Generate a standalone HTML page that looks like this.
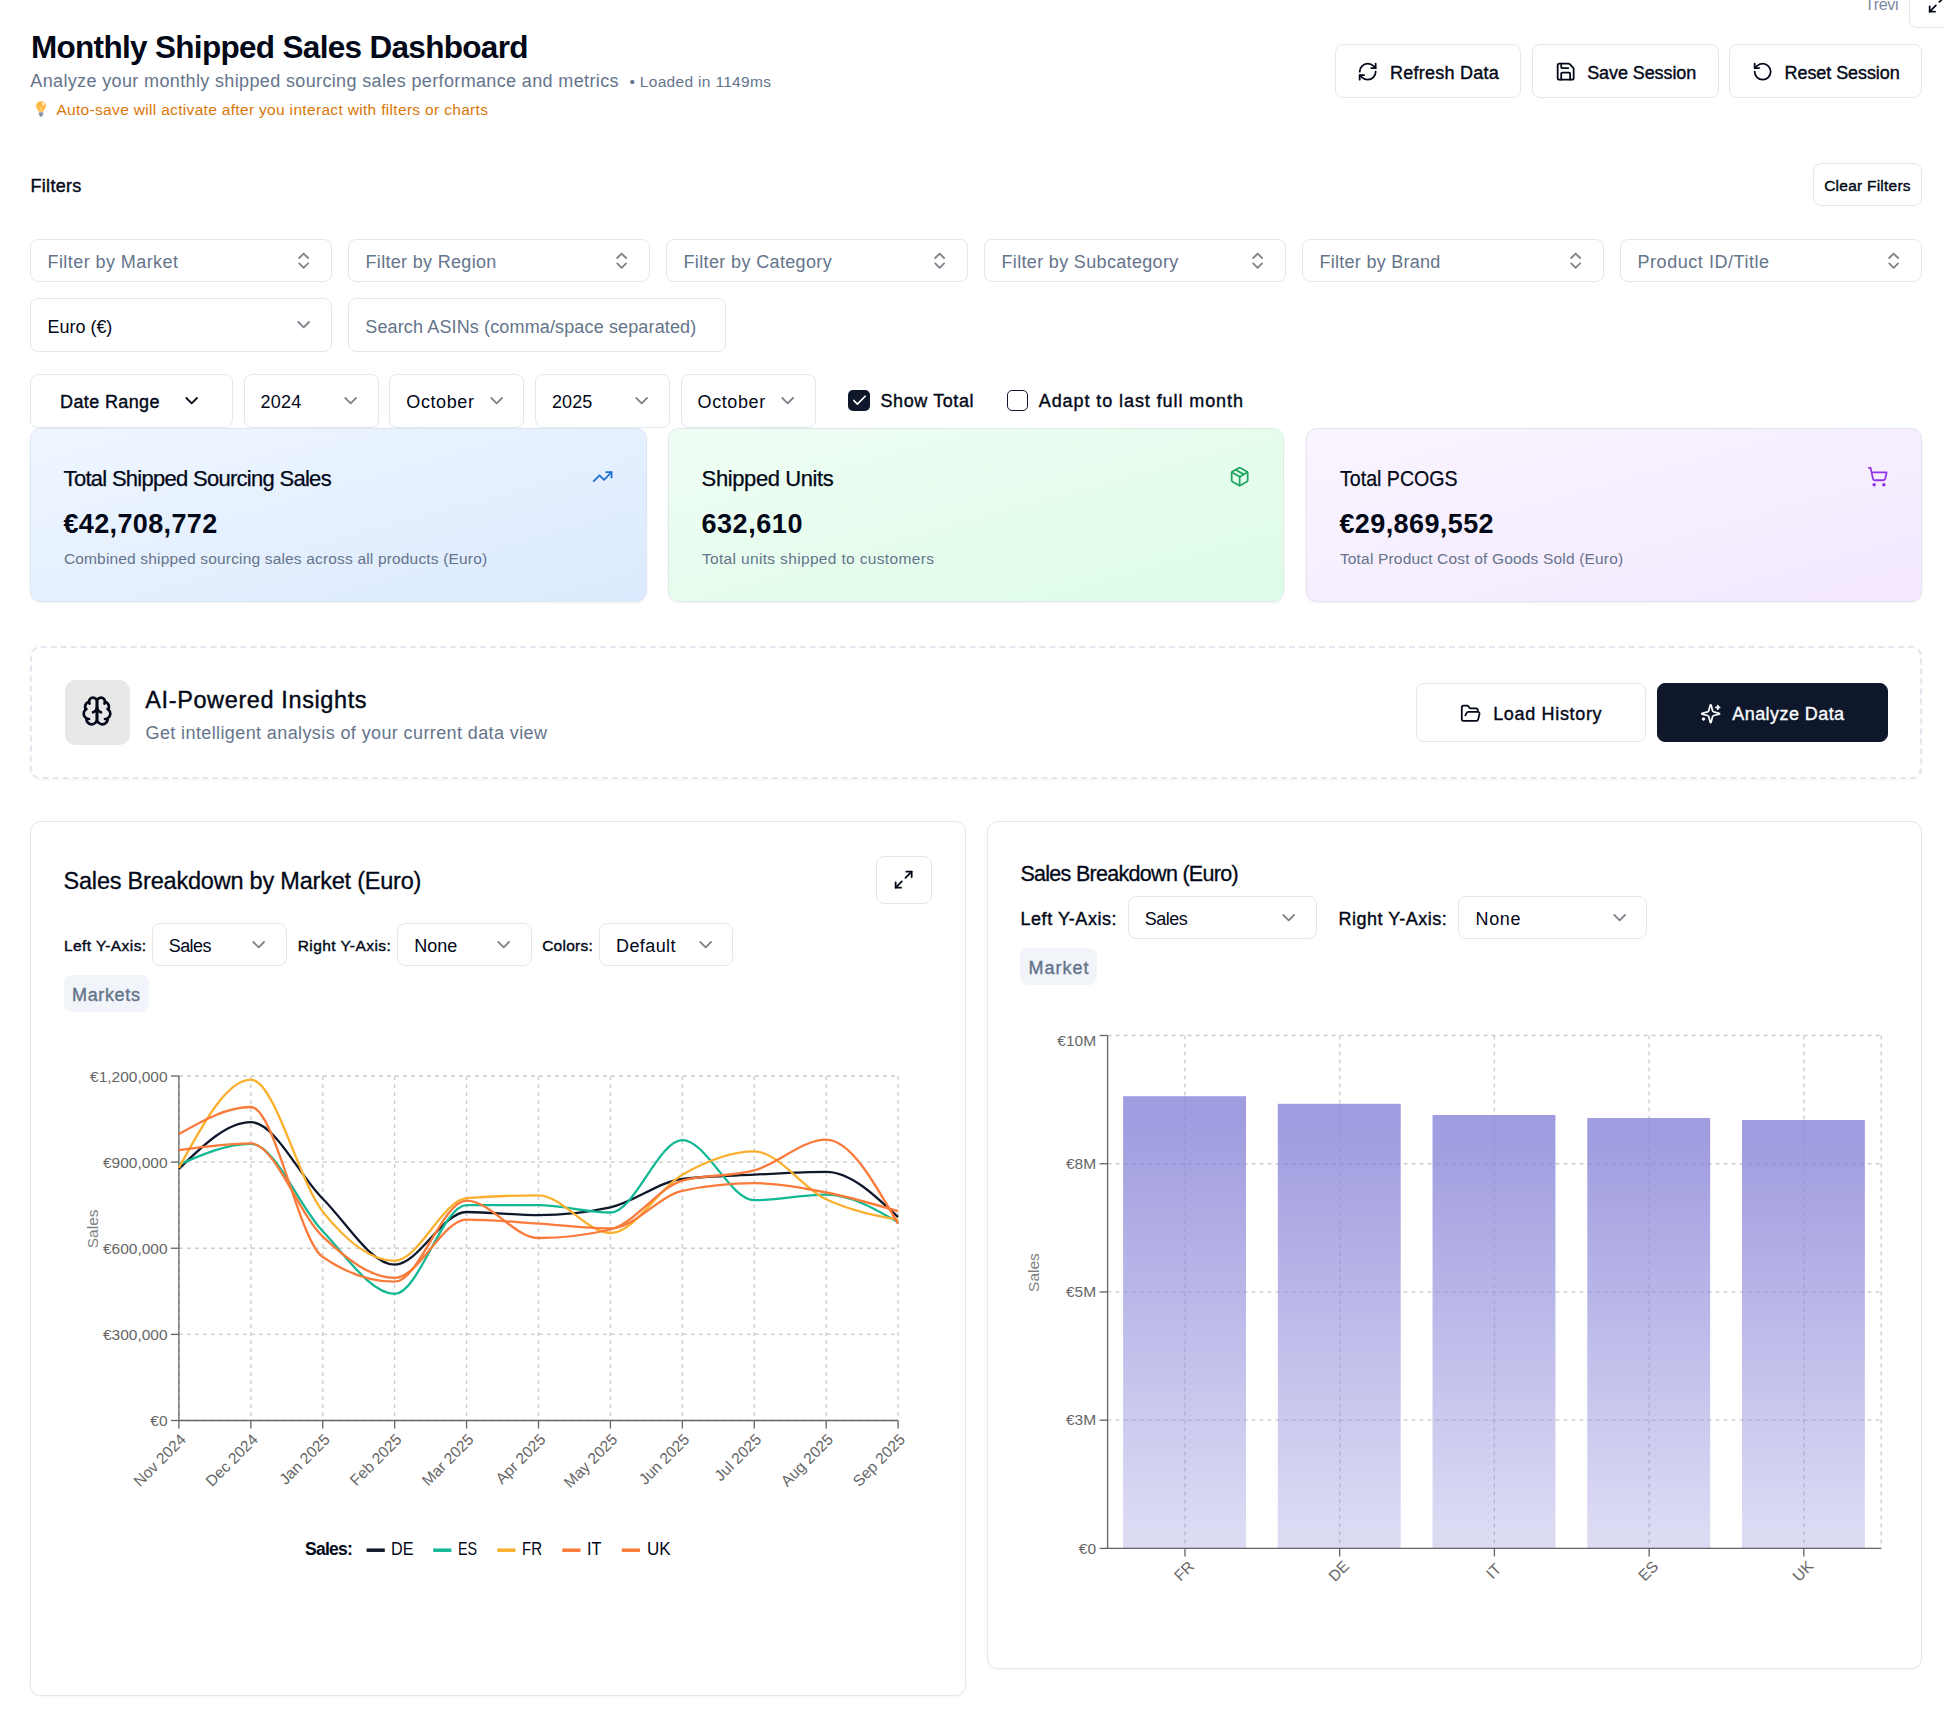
<!DOCTYPE html>
<html lang="en"><head><meta charset="utf-8"><title>Monthly Shipped Sales Dashboard</title>
<style>
html,body{margin:0;padding:0;background:#fff;}
body{width:1944px;height:1715px;position:relative;overflow:hidden;font-family:'Liberation Sans', sans-serif;}
.t{position:absolute;white-space:pre;line-height:1;}
svg text{font-family:'Liberation Sans', sans-serif;}
</style></head><body>
<svg style="position:absolute;left:33.3px;top:99.8px" width="16" height="18" viewBox="0 0 16 19"><path d="M8 1.2c-3 0-5.2 2.2-5.2 5 0 1.900 1 3.200 1.900 4.300.5.600.800 1.200.900 2h4.800c.1-.8.400-1.400.900-2 .9-1.100 1.900-2.400 1.900-4.300 0-2.800-2.200-5-5.200-5z" fill="#fdb945"/><ellipse cx="10.300" cy="3.900" rx="1.300" ry="1.700" transform="rotate(-35 10.300 3.900)" fill="#fff3d6"/><path d="M6.800 7l1.200 4 1.200-4" fill="none" stroke="#fbd27f" stroke-width=".8"/><rect x="5.600" y="12.800" width="4.800" height="3.400" rx=".8" fill="#8a95a3"/><rect x="6.600" y="16.200" width="2.800" height="1.200" rx=".6" fill="#5d6873"/></svg>
<div style="position:absolute;left:1909.00px;top:-20.00px;width:56.00px;height:48.00px;box-sizing:border-box;border:1px solid #e2e8f0;border-radius:8px;background:#fff"></div>
<svg style="position:absolute;left:1927.20px;top:-6.80px;opacity:1" width="21.33" height="21.33" viewBox="0 0 24 24" fill="none" stroke="#020817" stroke-width="2" stroke-linecap="round" stroke-linejoin="round"><polyline points="15 3 21 3 21 9"/><polyline points="9 21 3 21 3 15"/><line x1="21" x2="14" y1="3" y2="10"/><line x1="3" x2="10" y1="21" y2="14"/></svg>
<div style="position:absolute;left:1335.00px;top:44.00px;width:186.00px;height:54.00px;box-sizing:border-box;border:1px solid #e2e8f0;border-radius:8px;background:#fff"></div>
<svg style="position:absolute;left:1356.60px;top:61.13px;opacity:1" width="21.33" height="21.33" viewBox="0 0 24 24" fill="none" stroke="#020817" stroke-width="2" stroke-linecap="round" stroke-linejoin="round"><path d="M3 12a9 9 0 0 1 9-9 9.75 9.75 0 0 1 6.74 2.74L21 8"/><path d="M21 3v5h-5"/><path d="M21 12a9 9 0 0 1-9 9 9.75 9.75 0 0 1-6.74-2.74L3 16"/><path d="M8 16H3v5"/></svg>
<div style="position:absolute;left:1532.00px;top:44.00px;width:187.00px;height:54.00px;box-sizing:border-box;border:1px solid #e2e8f0;border-radius:8px;background:#fff"></div>
<svg style="position:absolute;left:1554.50px;top:61.13px;opacity:1" width="21.33" height="21.33" viewBox="0 0 24 24" fill="none" stroke="#020817" stroke-width="2" stroke-linecap="round" stroke-linejoin="round"><path d="M15.2 3a2 2 0 0 1 1.4.6l3.8 3.8a2 2 0 0 1 .6 1.4V19a2 2 0 0 1-2 2H5a2 2 0 0 1-2-2V5a2 2 0 0 1 2-2z"/><path d="M17 21v-7a1 1 0 0 0-1-1H8a1 1 0 0 0-1 1v7"/><path d="M7 3v4a1 1 0 0 0 1 1h7"/></svg>
<div style="position:absolute;left:1729.00px;top:44.00px;width:193.00px;height:54.00px;box-sizing:border-box;border:1px solid #e2e8f0;border-radius:8px;background:#fff"></div>
<svg style="position:absolute;left:1751.70px;top:61.13px;opacity:1" width="21.33" height="21.33" viewBox="0 0 24 24" fill="none" stroke="#020817" stroke-width="2" stroke-linecap="round" stroke-linejoin="round"><path d="M3 12a9 9 0 1 0 9-9 9.75 9.75 0 0 0-6.74 2.74L3 8"/><path d="M3 3v5h5"/></svg>
<div style="position:absolute;left:1813.00px;top:163.00px;width:109.00px;height:43.00px;box-sizing:border-box;border:1px solid #e2e8f0;border-radius:8px;background:#fff"></div>
<div style="position:absolute;left:30.00px;top:239.00px;width:302.00px;height:43.00px;box-sizing:border-box;border:1px solid #e2e8f0;border-radius:8px;background:#fff"></div>
<svg style="position:absolute;left:292.80px;top:249.90px;opacity:0.5" width="21.33" height="21.33" viewBox="0 0 24 24" fill="none" stroke="#020817" stroke-width="2" stroke-linecap="round" stroke-linejoin="round"><path d="m7 15 5 5 5-5"/><path d="m7 9 5-5 5 5"/></svg>
<div style="position:absolute;left:348.00px;top:239.00px;width:302.00px;height:43.00px;box-sizing:border-box;border:1px solid #e2e8f0;border-radius:8px;background:#fff"></div>
<svg style="position:absolute;left:610.80px;top:249.90px;opacity:0.5" width="21.33" height="21.33" viewBox="0 0 24 24" fill="none" stroke="#020817" stroke-width="2" stroke-linecap="round" stroke-linejoin="round"><path d="m7 15 5 5 5-5"/><path d="m7 9 5-5 5 5"/></svg>
<div style="position:absolute;left:666.00px;top:239.00px;width:302.00px;height:43.00px;box-sizing:border-box;border:1px solid #e2e8f0;border-radius:8px;background:#fff"></div>
<svg style="position:absolute;left:928.80px;top:249.90px;opacity:0.5" width="21.33" height="21.33" viewBox="0 0 24 24" fill="none" stroke="#020817" stroke-width="2" stroke-linecap="round" stroke-linejoin="round"><path d="m7 15 5 5 5-5"/><path d="m7 9 5-5 5 5"/></svg>
<div style="position:absolute;left:984.00px;top:239.00px;width:302.00px;height:43.00px;box-sizing:border-box;border:1px solid #e2e8f0;border-radius:8px;background:#fff"></div>
<svg style="position:absolute;left:1246.80px;top:249.90px;opacity:0.5" width="21.33" height="21.33" viewBox="0 0 24 24" fill="none" stroke="#020817" stroke-width="2" stroke-linecap="round" stroke-linejoin="round"><path d="m7 15 5 5 5-5"/><path d="m7 9 5-5 5 5"/></svg>
<div style="position:absolute;left:1302.00px;top:239.00px;width:302.00px;height:43.00px;box-sizing:border-box;border:1px solid #e2e8f0;border-radius:8px;background:#fff"></div>
<svg style="position:absolute;left:1564.80px;top:249.90px;opacity:0.5" width="21.33" height="21.33" viewBox="0 0 24 24" fill="none" stroke="#020817" stroke-width="2" stroke-linecap="round" stroke-linejoin="round"><path d="m7 15 5 5 5-5"/><path d="m7 9 5-5 5 5"/></svg>
<div style="position:absolute;left:1620.00px;top:239.00px;width:302.00px;height:43.00px;box-sizing:border-box;border:1px solid #e2e8f0;border-radius:8px;background:#fff"></div>
<svg style="position:absolute;left:1882.80px;top:249.90px;opacity:0.5" width="21.33" height="21.33" viewBox="0 0 24 24" fill="none" stroke="#020817" stroke-width="2" stroke-linecap="round" stroke-linejoin="round"><path d="m7 15 5 5 5-5"/><path d="m7 9 5-5 5 5"/></svg>
<div style="position:absolute;left:30.00px;top:298.00px;width:302.00px;height:54.00px;box-sizing:border-box;border:1px solid #e2e8f0;border-radius:8px;background:#fff"></div>
<svg style="position:absolute;left:292.60px;top:313.70px;opacity:0.5" width="21.33" height="21.33" viewBox="0 0 24 24" fill="none" stroke="#020817" stroke-width="2" stroke-linecap="round" stroke-linejoin="round"><path d="m6 9 6 6 6-6"/></svg>
<div style="position:absolute;left:348.00px;top:298.00px;width:378.00px;height:54.00px;box-sizing:border-box;border:1px solid #e2e8f0;border-radius:8px;background:#fff"></div>
<div style="position:absolute;left:30.00px;top:374.00px;width:203.00px;height:54.00px;box-sizing:border-box;border:1px solid #e2e8f0;border-radius:8px;background:#fff"></div>
<svg style="position:absolute;left:181.20px;top:389.60px;opacity:1" width="21.33" height="21.33" viewBox="0 0 24 24" fill="none" stroke="#020817" stroke-width="2" stroke-linecap="round" stroke-linejoin="round"><path d="m6 9 6 6 6-6"/></svg>
<div style="position:absolute;left:244.00px;top:374.00px;width:135.00px;height:54.00px;box-sizing:border-box;border:1px solid #e2e8f0;border-radius:8px;background:#fff"></div>
<svg style="position:absolute;left:340.20px;top:389.60px;opacity:0.5" width="21.33" height="21.33" viewBox="0 0 24 24" fill="none" stroke="#020817" stroke-width="2" stroke-linecap="round" stroke-linejoin="round"><path d="m6 9 6 6 6-6"/></svg>
<div style="position:absolute;left:389.00px;top:374.00px;width:135.00px;height:54.00px;box-sizing:border-box;border:1px solid #e2e8f0;border-radius:8px;background:#fff"></div>
<svg style="position:absolute;left:486.20px;top:389.60px;opacity:0.5" width="21.33" height="21.33" viewBox="0 0 24 24" fill="none" stroke="#020817" stroke-width="2" stroke-linecap="round" stroke-linejoin="round"><path d="m6 9 6 6 6-6"/></svg>
<div style="position:absolute;left:535.00px;top:374.00px;width:135.00px;height:54.00px;box-sizing:border-box;border:1px solid #e2e8f0;border-radius:8px;background:#fff"></div>
<svg style="position:absolute;left:631.20px;top:389.60px;opacity:0.5" width="21.33" height="21.33" viewBox="0 0 24 24" fill="none" stroke="#020817" stroke-width="2" stroke-linecap="round" stroke-linejoin="round"><path d="m6 9 6 6 6-6"/></svg>
<div style="position:absolute;left:681.00px;top:374.00px;width:135.00px;height:54.00px;box-sizing:border-box;border:1px solid #e2e8f0;border-radius:8px;background:#fff"></div>
<svg style="position:absolute;left:777.40px;top:389.60px;opacity:0.5" width="21.33" height="21.33" viewBox="0 0 24 24" fill="none" stroke="#020817" stroke-width="2" stroke-linecap="round" stroke-linejoin="round"><path d="m6 9 6 6 6-6"/></svg>
<div style="position:absolute;left:848.00px;top:390.00px;width:22.00px;height:21.00px;box-sizing:border-box;background:#0f172a;border-radius:5px"></div>
<svg style="position:absolute;left:850.50px;top:392.00px;opacity:1" width="17" height="17" viewBox="0 0 24 24" fill="none" stroke="#fff" stroke-width="2.4" stroke-linecap="round" stroke-linejoin="round"><path d="M20 6 9 17l-5-5"/></svg>
<div style="position:absolute;left:1007.00px;top:390.00px;width:21.00px;height:21.00px;box-sizing:border-box;border:1.33px solid #0f172a;border-radius:5px;background:#fff"></div>
<div style="position:absolute;left:30.00px;top:428.00px;width:617.00px;height:174.00px;box-sizing:border-box;border:1px solid #dde6f5;border-radius:10.67px;background:linear-gradient(to bottom right,#eff6ff 0%,#dbeafe 100%);box-shadow:0 1px 2.5px rgba(0,0,0,.06)"></div>
<svg style="position:absolute;left:591.80px;top:466.30px;opacity:1" width="21.33" height="21.33" viewBox="0 0 24 24" fill="none" stroke="#1d6fd1" stroke-width="2" stroke-linecap="round" stroke-linejoin="round"><polyline points="22 7 13.5 15.5 8.5 10.5 2 17"/><polyline points="16 7 22 7 22 13"/></svg>
<div style="position:absolute;left:668.00px;top:428.00px;width:616.00px;height:174.00px;box-sizing:border-box;border:1px solid #dfeae8;border-radius:10.67px;background:linear-gradient(to bottom right,#f0fdf4 0%,#dcfce7 100%);box-shadow:0 1px 2.5px rgba(0,0,0,.06)"></div>
<svg style="position:absolute;left:1228.80px;top:466.30px;opacity:1" width="21.33" height="21.33" viewBox="0 0 24 24" fill="none" stroke="#1fa463" stroke-width="2" stroke-linecap="round" stroke-linejoin="round"><path d="m7.5 4.27 9 5.15"/><path d="M21 8a2 2 0 0 0-1-1.73l-7-4a2 2 0 0 0-2 0l-7 4A2 2 0 0 0 3 8v8a2 2 0 0 0 1 1.73l7 4a2 2 0 0 0 2 0l7-4A2 2 0 0 0 21 16Z"/><path d="m3.3 7 8.7 5 8.7-5"/><path d="M12 22V12"/></svg>
<div style="position:absolute;left:1306.00px;top:428.00px;width:616.00px;height:174.00px;box-sizing:border-box;border:1px solid #e4e2f0;border-radius:10.67px;background:linear-gradient(to bottom right,#faf5ff 0%,#f3e8ff 100%);box-shadow:0 1px 2.5px rgba(0,0,0,.06)"></div>
<svg style="position:absolute;left:1866.80px;top:466.30px;opacity:1" width="21.33" height="21.33" viewBox="0 0 24 24" fill="none" stroke="#9333ea" stroke-width="2" stroke-linecap="round" stroke-linejoin="round"><circle cx="8" cy="21" r="1"/><circle cx="19" cy="21" r="1"/><path d="M2.05 2.05h2l2.66 12.42a2 2 0 0 0 2 1.58h9.78a2 2 0 0 0 1.95-1.57l1.65-7.43H5.12"/></svg>
<div style="position:absolute;left:30.00px;top:646.00px;width:1892.00px;height:133.00px;box-sizing:border-box;border:2px dashed #e2e8f0;border-radius:10.67px;background:#fff;box-shadow:0 1px 2.5px rgba(0,0,0,.05)"></div>
<div style="position:absolute;left:65.00px;top:680.00px;width:65.00px;height:65.00px;box-sizing:border-box;background:#e8e8e8;border-radius:10.67px"></div>
<svg style="position:absolute;left:80.80px;top:695.40px;opacity:1" width="32" height="32" viewBox="0 0 24 24" fill="none" stroke="#020817" stroke-width="2" stroke-linecap="round" stroke-linejoin="round"><path d="M12 5a3 3 0 1 0-5.997.125 4 4 0 0 0-2.526 5.77 4 4 0 0 0 .556 6.588A4 4 0 1 0 12 18Z"/><path d="M12 5a3 3 0 1 1 5.997.125 4 4 0 0 1 2.526 5.77 4 4 0 0 1-.556 6.588A4 4 0 1 1 12 18Z"/><path d="M15 13a4.5 4.5 0 0 1-3-4 4.5 4.5 0 0 1-3 4"/><path d="M17.599 6.5a3 3 0 0 0 .399-1.375"/><path d="M6.003 5.125A3 3 0 0 0 6.401 6.5"/><path d="M3.477 10.896a4 4 0 0 1 .585-.396"/><path d="M19.938 10.5a4 4 0 0 1 .585.396"/><path d="M6 18a4 4 0 0 1-1.967-.516"/><path d="M19.967 17.484A4 4 0 0 1 18 18"/></svg>
<div style="position:absolute;left:1416.00px;top:683.00px;width:230.00px;height:59.00px;box-sizing:border-box;border:1px solid #e2e8f0;border-radius:8px;background:#fff"></div>
<svg style="position:absolute;left:1460.10px;top:702.63px;opacity:1" width="21.33" height="21.33" viewBox="0 0 24 24" fill="none" stroke="#020817" stroke-width="2" stroke-linecap="round" stroke-linejoin="round"><path d="m6 14 1.5-2.9A2 2 0 0 1 9.24 10H20a2 2 0 0 1 1.94 2.5l-1.54 6a2 2 0 0 1-1.95 1.5H4a2 2 0 0 1-2-2V5a2 2 0 0 1 2-2h3.9a2 2 0 0 1 1.69.9l.81 1.2a2 2 0 0 0 1.67.9H18a2 2 0 0 1 2 2v2"/></svg>
<div style="position:absolute;left:1657.00px;top:683.00px;width:231.00px;height:59.00px;box-sizing:border-box;border:1px solid #0f172a;border-radius:8px;background:#0f172a"></div>
<svg style="position:absolute;left:1700.10px;top:702.63px;opacity:1" width="21.33" height="21.33" viewBox="0 0 24 24" fill="none" stroke="#f8fafc" stroke-width="2" stroke-linecap="round" stroke-linejoin="round"><path d="M9.937 15.5A2 2 0 0 0 8.5 14.063l-6.135-1.582a.5.5 0 0 1 0-.962L8.5 9.936A2 2 0 0 0 9.937 8.5l1.582-6.135a.5.5 0 0 1 .963 0L14.063 8.5A2 2 0 0 0 15.5 9.937l6.135 1.581a.5.5 0 0 1 0 .964L15.5 14.063a2 2 0 0 0-1.437 1.437l-1.582 6.135a.5.5 0 0 1-.963 0z"/><path d="M20 3v4"/><path d="M22 5h-4"/><path d="M4 17v2"/><path d="M5 18H3"/></svg>
<div style="position:absolute;left:30.00px;top:821.00px;width:936.00px;height:875.00px;box-sizing:border-box;border:1px solid #e2e8f0;border-radius:10.67px;background:#fff;box-shadow:0 1px 2.5px rgba(0,0,0,.05)"></div>
<div style="position:absolute;left:987.00px;top:821.00px;width:935.00px;height:848.00px;box-sizing:border-box;border:1px solid #e2e8f0;border-radius:10.67px;background:#fff;box-shadow:0 1px 2.5px rgba(0,0,0,.05)"></div>
<div style="position:absolute;left:876.00px;top:856.00px;width:56.00px;height:48.00px;box-sizing:border-box;border:1px solid #e2e8f0;border-radius:8px;background:#fff"></div>
<svg style="position:absolute;left:893.30px;top:869.30px;opacity:1" width="21.33" height="21.33" viewBox="0 0 24 24" fill="none" stroke="#020817" stroke-width="2" stroke-linecap="round" stroke-linejoin="round"><polyline points="15 3 21 3 21 9"/><polyline points="9 21 3 21 3 15"/><line x1="21" x2="14" y1="3" y2="10"/><line x1="3" x2="10" y1="21" y2="14"/></svg>
<div style="position:absolute;left:152.00px;top:923.00px;width:135.00px;height:43.00px;box-sizing:border-box;border:1px solid #e2e8f0;border-radius:8px;background:#fff"></div>
<svg style="position:absolute;left:248.10px;top:933.83px;opacity:0.5" width="21.33" height="21.33" viewBox="0 0 24 24" fill="none" stroke="#020817" stroke-width="2" stroke-linecap="round" stroke-linejoin="round"><path d="m6 9 6 6 6-6"/></svg>
<div style="position:absolute;left:397.00px;top:923.00px;width:135.00px;height:43.00px;box-sizing:border-box;border:1px solid #e2e8f0;border-radius:8px;background:#fff"></div>
<svg style="position:absolute;left:493.10px;top:933.83px;opacity:0.5" width="21.33" height="21.33" viewBox="0 0 24 24" fill="none" stroke="#020817" stroke-width="2" stroke-linecap="round" stroke-linejoin="round"><path d="m6 9 6 6 6-6"/></svg>
<div style="position:absolute;left:599.00px;top:923.00px;width:134.00px;height:43.00px;box-sizing:border-box;border:1px solid #e2e8f0;border-radius:8px;background:#fff"></div>
<svg style="position:absolute;left:695.10px;top:933.83px;opacity:0.5" width="21.33" height="21.33" viewBox="0 0 24 24" fill="none" stroke="#020817" stroke-width="2" stroke-linecap="round" stroke-linejoin="round"><path d="m6 9 6 6 6-6"/></svg>
<div style="position:absolute;left:64.00px;top:975.00px;width:85.00px;height:37.00px;box-sizing:border-box;background:#f1f5f9;border-radius:8px"></div>
<div style="position:absolute;left:1128.00px;top:896.00px;width:189.00px;height:43.00px;box-sizing:border-box;border:1px solid #e2e8f0;border-radius:8px;background:#fff"></div>
<svg style="position:absolute;left:1278.10px;top:906.83px;opacity:0.5" width="21.33" height="21.33" viewBox="0 0 24 24" fill="none" stroke="#020817" stroke-width="2" stroke-linecap="round" stroke-linejoin="round"><path d="m6 9 6 6 6-6"/></svg>
<div style="position:absolute;left:1458.00px;top:896.00px;width:189.00px;height:43.00px;box-sizing:border-box;border:1px solid #e2e8f0;border-radius:8px;background:#fff"></div>
<svg style="position:absolute;left:1608.70px;top:906.83px;opacity:0.5" width="21.33" height="21.33" viewBox="0 0 24 24" fill="none" stroke="#020817" stroke-width="2" stroke-linecap="round" stroke-linejoin="round"><path d="m6 9 6 6 6-6"/></svg>
<div style="position:absolute;left:1020.00px;top:948.00px;width:77.00px;height:37.00px;box-sizing:border-box;background:#f1f5f9;border-radius:8px"></div>
<svg style="position:absolute;left:0;top:0" width="1944" height="1715" viewBox="0 0 1944 1715">
<line x1="178.90" y1="1076.0" x2="178.90" y2="1420.5" stroke="#ccc" stroke-dasharray="4 4" stroke-width="1.33"/>
<line x1="250.82" y1="1076.0" x2="250.82" y2="1420.5" stroke="#ccc" stroke-dasharray="4 4" stroke-width="1.33"/>
<line x1="322.74" y1="1076.0" x2="322.74" y2="1420.5" stroke="#ccc" stroke-dasharray="4 4" stroke-width="1.33"/>
<line x1="394.66" y1="1076.0" x2="394.66" y2="1420.5" stroke="#ccc" stroke-dasharray="4 4" stroke-width="1.33"/>
<line x1="466.58" y1="1076.0" x2="466.58" y2="1420.5" stroke="#ccc" stroke-dasharray="4 4" stroke-width="1.33"/>
<line x1="538.50" y1="1076.0" x2="538.50" y2="1420.5" stroke="#ccc" stroke-dasharray="4 4" stroke-width="1.33"/>
<line x1="610.42" y1="1076.0" x2="610.42" y2="1420.5" stroke="#ccc" stroke-dasharray="4 4" stroke-width="1.33"/>
<line x1="682.34" y1="1076.0" x2="682.34" y2="1420.5" stroke="#ccc" stroke-dasharray="4 4" stroke-width="1.33"/>
<line x1="754.26" y1="1076.0" x2="754.26" y2="1420.5" stroke="#ccc" stroke-dasharray="4 4" stroke-width="1.33"/>
<line x1="826.18" y1="1076.0" x2="826.18" y2="1420.5" stroke="#ccc" stroke-dasharray="4 4" stroke-width="1.33"/>
<line x1="898.10" y1="1076.0" x2="898.10" y2="1420.5" stroke="#ccc" stroke-dasharray="4 4" stroke-width="1.33"/>
<line x1="178.9" y1="1420.50" x2="898.1" y2="1420.50" stroke="#ccc" stroke-dasharray="4 4" stroke-width="1.33"/>
<line x1="178.9" y1="1334.38" x2="898.1" y2="1334.38" stroke="#ccc" stroke-dasharray="4 4" stroke-width="1.33"/>
<line x1="178.9" y1="1248.25" x2="898.1" y2="1248.25" stroke="#ccc" stroke-dasharray="4 4" stroke-width="1.33"/>
<line x1="178.9" y1="1162.12" x2="898.1" y2="1162.12" stroke="#ccc" stroke-dasharray="4 4" stroke-width="1.33"/>
<line x1="178.9" y1="1076.00" x2="898.1" y2="1076.00" stroke="#ccc" stroke-dasharray="4 4" stroke-width="1.33"/>
<line x1="178.9" y1="1076.0" x2="178.9" y2="1420.5" stroke="#666" stroke-width="1.33"/>
<line x1="178.9" y1="1420.5" x2="898.1" y2="1420.5" stroke="#666" stroke-width="1.33"/>
<line x1="170.9" y1="1420.50" x2="178.9" y2="1420.50" stroke="#666" stroke-width="1.33"/>
<text x="167.60" y="1426.10" text-anchor="end" font-size="15.5" fill="#666">€0</text>
<line x1="170.9" y1="1334.38" x2="178.9" y2="1334.38" stroke="#666" stroke-width="1.33"/>
<text x="167.60" y="1339.97" text-anchor="end" font-size="15.5" fill="#666">€300,000</text>
<line x1="170.9" y1="1248.25" x2="178.9" y2="1248.25" stroke="#666" stroke-width="1.33"/>
<text x="167.60" y="1253.85" text-anchor="end" font-size="15.5" fill="#666">€600,000</text>
<line x1="170.9" y1="1162.12" x2="178.9" y2="1162.12" stroke="#666" stroke-width="1.33"/>
<text x="167.60" y="1167.72" text-anchor="end" font-size="15.5" fill="#666">€900,000</text>
<line x1="170.9" y1="1076.00" x2="178.9" y2="1076.00" stroke="#666" stroke-width="1.33"/>
<text x="167.60" y="1081.60" text-anchor="end" font-size="15.5" fill="#666">€1,200,000</text>
<line x1="178.90" y1="1420.5" x2="178.90" y2="1428.5" stroke="#666" stroke-width="1.33"/>
<text transform="translate(186.90,1440.50) rotate(-45)" text-anchor="end" font-size="15.5" fill="#666">Nov 2024</text>
<line x1="250.82" y1="1420.5" x2="250.82" y2="1428.5" stroke="#666" stroke-width="1.33"/>
<text transform="translate(258.82,1440.50) rotate(-45)" text-anchor="end" font-size="15.5" fill="#666">Dec 2024</text>
<line x1="322.74" y1="1420.5" x2="322.74" y2="1428.5" stroke="#666" stroke-width="1.33"/>
<text transform="translate(330.74,1440.50) rotate(-45)" text-anchor="end" font-size="15.5" fill="#666">Jan 2025</text>
<line x1="394.66" y1="1420.5" x2="394.66" y2="1428.5" stroke="#666" stroke-width="1.33"/>
<text transform="translate(402.66,1440.50) rotate(-45)" text-anchor="end" font-size="15.5" fill="#666">Feb 2025</text>
<line x1="466.58" y1="1420.5" x2="466.58" y2="1428.5" stroke="#666" stroke-width="1.33"/>
<text transform="translate(474.58,1440.50) rotate(-45)" text-anchor="end" font-size="15.5" fill="#666">Mar 2025</text>
<line x1="538.50" y1="1420.5" x2="538.50" y2="1428.5" stroke="#666" stroke-width="1.33"/>
<text transform="translate(546.50,1440.50) rotate(-45)" text-anchor="end" font-size="15.5" fill="#666">Apr 2025</text>
<line x1="610.42" y1="1420.5" x2="610.42" y2="1428.5" stroke="#666" stroke-width="1.33"/>
<text transform="translate(618.42,1440.50) rotate(-45)" text-anchor="end" font-size="15.5" fill="#666">May 2025</text>
<line x1="682.34" y1="1420.5" x2="682.34" y2="1428.5" stroke="#666" stroke-width="1.33"/>
<text transform="translate(690.34,1440.50) rotate(-45)" text-anchor="end" font-size="15.5" fill="#666">Jun 2025</text>
<line x1="754.26" y1="1420.5" x2="754.26" y2="1428.5" stroke="#666" stroke-width="1.33"/>
<text transform="translate(762.26,1440.50) rotate(-45)" text-anchor="end" font-size="15.5" fill="#666">Jul 2025</text>
<line x1="826.18" y1="1420.5" x2="826.18" y2="1428.5" stroke="#666" stroke-width="1.33"/>
<text transform="translate(834.18,1440.50) rotate(-45)" text-anchor="end" font-size="15.5" fill="#666">Aug 2025</text>
<line x1="898.10" y1="1420.5" x2="898.10" y2="1428.5" stroke="#666" stroke-width="1.33"/>
<text transform="translate(906.10,1440.50) rotate(-45)" text-anchor="end" font-size="15.5" fill="#666">Sep 2025</text>
<text transform="translate(97.5,1248.25) rotate(-90)" text-anchor="start" font-size="15.5" fill="#808080">Sales</text>
<path d="M178.90,1168.90C202.87,1145.55,226.85,1122.20,250.82,1122.20C274.79,1122.20,298.77,1174.95,322.74,1198.70C346.71,1222.45,370.69,1264.70,394.66,1264.70C418.63,1264.70,442.61,1212.00,466.58,1212.00C490.55,1212.00,514.53,1215.20,538.50,1215.20C562.47,1215.20,586.45,1212.60,610.42,1207.40C634.39,1202.20,658.37,1181.70,682.34,1178.90C706.31,1176.10,730.29,1175.88,754.26,1174.70C778.23,1173.52,802.21,1171.80,826.18,1171.80C850.15,1171.80,874.13,1194.45,898.10,1217.10" fill="none" stroke="#0f172a" stroke-width="2.3"/>
<path d="M178.90,1164.60C202.87,1154.20,226.85,1143.80,250.82,1143.80C274.79,1143.80,298.77,1206.28,322.74,1231.30C346.71,1256.32,370.69,1293.90,394.66,1293.90C418.63,1293.90,442.61,1205.10,466.58,1205.10C490.55,1205.10,514.53,1205.10,538.50,1205.10C562.47,1205.10,586.45,1212.50,610.42,1212.50C634.39,1212.50,658.37,1140.10,682.34,1140.10C706.31,1140.10,730.29,1200.20,754.26,1200.20C778.23,1200.20,802.21,1194.60,826.18,1194.60C850.15,1194.60,874.13,1208.40,898.10,1222.20" fill="none" stroke="#12b894" stroke-width="2.3"/>
<path d="M178.90,1167.90C202.87,1123.80,226.85,1079.70,250.82,1079.70C274.79,1079.70,298.77,1181.42,322.74,1211.60C346.71,1241.78,370.69,1260.80,394.66,1260.80C418.63,1260.80,442.61,1200.13,466.58,1198.20C490.55,1196.27,514.53,1195.30,538.50,1195.30C562.47,1195.30,586.45,1233.00,610.42,1233.00C634.39,1233.00,658.37,1188.30,682.34,1174.70C706.31,1161.10,730.29,1151.40,754.26,1151.40C778.23,1151.40,802.21,1187.92,826.18,1199.30C850.15,1210.68,874.13,1215.19,898.10,1219.70" fill="none" stroke="#fbb02d" stroke-width="2.3"/>
<path d="M178.90,1134.00C202.87,1120.50,226.85,1107.00,250.82,1107.00C274.79,1107.00,298.77,1240.53,322.74,1257.00C346.71,1273.47,370.69,1281.70,394.66,1281.70C418.63,1281.70,442.61,1200.60,466.58,1200.60C490.55,1200.60,514.53,1238.00,538.50,1238.00C562.47,1238.00,586.45,1235.17,610.42,1229.50C634.39,1223.83,658.37,1187.40,682.34,1180.60C706.31,1173.80,730.29,1177.20,754.26,1170.40C778.23,1163.60,802.21,1139.60,826.18,1139.60C850.15,1139.60,874.13,1181.75,898.10,1223.90" fill="none" stroke="#fa7a3a" stroke-width="2.3"/>
<path d="M178.90,1150.20C202.87,1146.80,226.85,1143.40,250.82,1143.40C274.79,1143.40,298.77,1214.18,322.74,1236.60C346.71,1259.02,370.69,1277.90,394.66,1277.90C418.63,1277.90,442.61,1219.60,466.58,1219.60C490.55,1219.60,514.53,1222.12,538.50,1223.60C562.47,1225.08,586.45,1228.50,610.42,1228.50C634.39,1228.50,658.37,1195.87,682.34,1190.80C706.31,1185.73,730.29,1183.20,754.26,1183.20C778.23,1183.20,802.21,1187.83,826.18,1192.50C850.15,1197.17,874.13,1204.18,898.10,1211.20" fill="none" stroke="#fa7a3a" stroke-width="2.3"/>
<line x1="366.6" y1="1550.2" x2="384.8" y2="1550.2" stroke="#0f172a" stroke-width="3.5"/>
<line x1="433.2" y1="1550.2" x2="451.4" y2="1550.2" stroke="#12b894" stroke-width="3.5"/>
<line x1="497.3" y1="1550.2" x2="515.5" y2="1550.2" stroke="#fbb02d" stroke-width="3.5"/>
<line x1="562.3" y1="1550.2" x2="580.5" y2="1550.2" stroke="#fa7a3a" stroke-width="3.5"/>
<line x1="621.8" y1="1550.2" x2="640.0" y2="1550.2" stroke="#fa7a3a" stroke-width="3.5"/>
<defs><linearGradient id="bg" x1="0" y1="0" x2="0" y2="1"><stop offset="5%" stop-color="#8884d8" stop-opacity="0.8"/><stop offset="95%" stop-color="#8884d8" stop-opacity="0.3"/></linearGradient></defs>
<line x1="1184.96" y1="1035.5" x2="1184.96" y2="1548.4" stroke="#ccc" stroke-dasharray="4 4" stroke-width="1.33"/>
<line x1="1339.68" y1="1035.5" x2="1339.68" y2="1548.4" stroke="#ccc" stroke-dasharray="4 4" stroke-width="1.33"/>
<line x1="1494.40" y1="1035.5" x2="1494.40" y2="1548.4" stroke="#ccc" stroke-dasharray="4 4" stroke-width="1.33"/>
<line x1="1649.12" y1="1035.5" x2="1649.12" y2="1548.4" stroke="#ccc" stroke-dasharray="4 4" stroke-width="1.33"/>
<line x1="1803.84" y1="1035.5" x2="1803.84" y2="1548.4" stroke="#ccc" stroke-dasharray="4 4" stroke-width="1.33"/>
<line x1="1881.2" y1="1035.5" x2="1881.2" y2="1548.4" stroke="#ccc" stroke-dasharray="4 4" stroke-width="1.33"/>
<line x1="1107.6" y1="1548.40" x2="1881.2" y2="1548.40" stroke="#ccc" stroke-dasharray="4 4" stroke-width="1.33"/>
<line x1="1107.6" y1="1420.18" x2="1881.2" y2="1420.18" stroke="#ccc" stroke-dasharray="4 4" stroke-width="1.33"/>
<line x1="1107.6" y1="1291.95" x2="1881.2" y2="1291.95" stroke="#ccc" stroke-dasharray="4 4" stroke-width="1.33"/>
<line x1="1107.6" y1="1163.72" x2="1881.2" y2="1163.72" stroke="#ccc" stroke-dasharray="4 4" stroke-width="1.33"/>
<line x1="1107.6" y1="1035.50" x2="1881.2" y2="1035.50" stroke="#ccc" stroke-dasharray="4 4" stroke-width="1.33"/>
<rect x="1123.10" y="1096.2" width="122.90" height="452.20" fill="url(#bg)"/>
<rect x="1277.82" y="1103.8" width="122.90" height="444.60" fill="url(#bg)"/>
<rect x="1432.54" y="1115" width="122.90" height="433.40" fill="url(#bg)"/>
<rect x="1587.26" y="1118" width="122.90" height="430.40" fill="url(#bg)"/>
<rect x="1741.98" y="1120" width="122.90" height="428.40" fill="url(#bg)"/>
<line x1="1107.6" y1="1035.5" x2="1107.6" y2="1548.4" stroke="#666" stroke-width="1.33"/>
<line x1="1107.6" y1="1548.4" x2="1881.2" y2="1548.4" stroke="#666" stroke-width="1.33"/>
<line x1="1099.6" y1="1548.40" x2="1107.6" y2="1548.40" stroke="#666" stroke-width="1.33"/>
<text x="1096.10" y="1553.70" text-anchor="end" font-size="15.5" fill="#666">€0</text>
<line x1="1099.6" y1="1420.18" x2="1107.6" y2="1420.18" stroke="#666" stroke-width="1.33"/>
<text x="1096.10" y="1425.48" text-anchor="end" font-size="15.5" fill="#666">€3M</text>
<line x1="1099.6" y1="1291.95" x2="1107.6" y2="1291.95" stroke="#666" stroke-width="1.33"/>
<text x="1096.10" y="1297.25" text-anchor="end" font-size="15.5" fill="#666">€5M</text>
<line x1="1099.6" y1="1163.72" x2="1107.6" y2="1163.72" stroke="#666" stroke-width="1.33"/>
<text x="1096.10" y="1169.02" text-anchor="end" font-size="15.5" fill="#666">€8M</text>
<line x1="1099.6" y1="1035.50" x2="1107.6" y2="1035.50" stroke="#666" stroke-width="1.33"/>
<text x="1096.10" y="1046.40" text-anchor="end" font-size="15.5" fill="#666">€10M</text>
<line x1="1184.96" y1="1548.4" x2="1184.96" y2="1556.4" stroke="#666" stroke-width="1.33"/>
<text transform="translate(1183.96,1570.90) rotate(-45)" text-anchor="middle" dominant-baseline="central" font-size="15.5" fill="#666">FR</text>
<line x1="1339.68" y1="1548.4" x2="1339.68" y2="1556.4" stroke="#666" stroke-width="1.33"/>
<text transform="translate(1338.68,1570.90) rotate(-45)" text-anchor="middle" dominant-baseline="central" font-size="15.5" fill="#666">DE</text>
<line x1="1494.40" y1="1548.4" x2="1494.40" y2="1556.4" stroke="#666" stroke-width="1.33"/>
<text transform="translate(1493.40,1570.90) rotate(-45)" text-anchor="middle" dominant-baseline="central" font-size="15.5" fill="#666">IT</text>
<line x1="1649.12" y1="1548.4" x2="1649.12" y2="1556.4" stroke="#666" stroke-width="1.33"/>
<text transform="translate(1648.12,1570.90) rotate(-45)" text-anchor="middle" dominant-baseline="central" font-size="15.5" fill="#666">ES</text>
<line x1="1803.84" y1="1548.4" x2="1803.84" y2="1556.4" stroke="#666" stroke-width="1.33"/>
<text transform="translate(1802.84,1570.90) rotate(-45)" text-anchor="middle" dominant-baseline="central" font-size="15.5" fill="#666">UK</text>
<text transform="translate(1039,1291.95) rotate(-90)" text-anchor="start" font-size="15.5" fill="#808080">Sales</text>
</svg>
<span id="t0" class="t" style="left:30.94px;top:32.01px;font-size:31.5px;color:#020817;font-weight:700;letter-spacing:-0.683px;">Monthly Shipped Sales Dashboard</span>
<span id="t1" class="t" style="left:30.28px;top:72.01px;font-size:18px;color:#64748b;letter-spacing:0.363px;">Analyze your monthly shipped sourcing sales performance and metrics</span>
<span id="t2" class="t" style="left:629.38px;top:74.00px;font-size:15.5px;color:#64748b;letter-spacing:0.323px;">• Loaded in 1149ms</span>
<span id="t3" class="t" style="left:56.38px;top:102.00px;font-size:15.5px;color:#d97706;letter-spacing:0.323px;">Auto-save will activate after you interact with filters or charts</span>
<span id="t4" class="t" style="left:1864.86px;top:-3.01px;font-size:16px;color:#7c8aa0;letter-spacing:-0.302px;">Trevi</span>
<span id="t5" class="t" style="left:1390.08px;top:64.01px;font-size:18px;color:#020817;-webkit-text-stroke:0.38px #020817;letter-spacing:0.243px;">Refresh Data</span>
<span id="t6" class="t" style="left:1587.18px;top:64.01px;font-size:18px;color:#020817;-webkit-text-stroke:0.38px #020817;letter-spacing:-0.092px;">Save Session</span>
<span id="t7" class="t" style="left:1784.58px;top:64.01px;font-size:18px;color:#020817;-webkit-text-stroke:0.38px #020817;letter-spacing:-0.076px;">Reset Session</span>
<span id="t8" class="t" style="left:30.53px;top:177.01px;font-size:18px;color:#020817;-webkit-text-stroke:0.38px #020817;letter-spacing:0.297px;">Filters</span>
<span id="t9" class="t" style="left:1824.18px;top:178.00px;font-size:15.5px;color:#020817;-webkit-text-stroke:0.38px #020817;letter-spacing:0.237px;">Clear Filters</span>
<span id="t10" class="t" style="left:47.53px;top:253.01px;font-size:18px;color:#64748b;letter-spacing:0.425px;">Filter by Market</span>
<span id="t11" class="t" style="left:365.53px;top:253.01px;font-size:18px;color:#64748b;letter-spacing:0.314px;">Filter by Region</span>
<span id="t12" class="t" style="left:683.53px;top:253.01px;font-size:18px;color:#64748b;letter-spacing:0.362px;">Filter by Category</span>
<span id="t13" class="t" style="left:1001.53px;top:253.01px;font-size:18px;color:#64748b;letter-spacing:0.333px;">Filter by Subcategory</span>
<span id="t14" class="t" style="left:1319.53px;top:253.01px;font-size:18px;color:#64748b;letter-spacing:0.269px;">Filter by Brand</span>
<span id="t15" class="t" style="left:1637.53px;top:253.01px;font-size:18px;color:#64748b;letter-spacing:0.544px;">Product ID/Title</span>
<span id="t16" class="t" style="left:47.53px;top:318.01px;font-size:18px;color:#020817;letter-spacing:-0.025px;">Euro (€)</span>
<span id="t17" class="t" style="left:365.28px;top:318.01px;font-size:18px;color:#64748b;letter-spacing:0.137px;">Search ASINs (comma/space separated)</span>
<span id="t18" class="t" style="left:60.03px;top:393.01px;font-size:18px;color:#020817;-webkit-text-stroke:0.38px #020817;letter-spacing:0.375px;">Date Range</span>
<span id="t19" class="t" style="left:260.53px;top:393.01px;font-size:18px;color:#020817;letter-spacing:0.258px;">2024</span>
<span id="t20" class="t" style="left:406.28px;top:393.01px;font-size:18px;color:#020817;letter-spacing:0.614px;">October</span>
<span id="t21" class="t" style="left:552.03px;top:393.01px;font-size:18px;color:#020817;letter-spacing:0.071px;">2025</span>
<span id="t22" class="t" style="left:697.53px;top:393.01px;font-size:18px;color:#020817;letter-spacing:0.614px;">October</span>
<span id="t23" class="t" style="left:880.53px;top:392.01px;font-size:18px;color:#020817;-webkit-text-stroke:0.38px #020817;letter-spacing:0.585px;">Show Total</span>
<span id="t24" class="t" style="left:1038.78px;top:392.01px;font-size:18px;color:#020817;-webkit-text-stroke:0.38px #020817;letter-spacing:0.915px;">Adapt to last full month</span>
<span id="t25" class="t" style="left:63.62px;top:468.00px;font-size:22px;color:#020817;-webkit-text-stroke:0.25px #020817;letter-spacing:-0.718px;">Total Shipped Sourcing Sales</span>
<span id="t26" class="t" style="left:63.42px;top:511.01px;font-size:27px;color:#020817;font-weight:700;letter-spacing:0.360px;">€42,708,772</span>
<span id="t27" class="t" style="left:63.88px;top:551.00px;font-size:15.5px;color:#64748b;letter-spacing:0.170px;">Combined shipped sourcing sales across all products (Euro)</span>
<span id="t28" class="t" style="left:701.62px;top:468.00px;font-size:22px;color:#020817;-webkit-text-stroke:0.25px #020817;letter-spacing:-0.397px;">Shipped Units</span>
<span id="t29" class="t" style="left:701.42px;top:511.01px;font-size:27px;color:#020817;font-weight:700;letter-spacing:0.573px;">632,610</span>
<span id="t30" class="t" style="left:701.88px;top:551.00px;font-size:15.5px;color:#64748b;letter-spacing:0.344px;">Total units shipped to customers</span>
<span id="t31" class="t" style="left:1339.62px;top:468.00px;font-size:22px;color:#020817;-webkit-text-stroke:0.25px #020817;transform:scaleX(0.8914);transform-origin:0 0;">Total PCOGS</span>
<span id="t32" class="t" style="left:1339.42px;top:511.01px;font-size:27px;color:#020817;font-weight:700;letter-spacing:0.406px;">€29,869,552</span>
<span id="t33" class="t" style="left:1339.88px;top:551.00px;font-size:15.5px;color:#64748b;letter-spacing:0.176px;">Total Product Cost of Goods Sold (Euro)</span>
<span id="t34" class="t" style="left:145.31px;top:689.00px;font-size:23.5px;color:#020817;-webkit-text-stroke:0.38px #020817;letter-spacing:0.611px;">AI-Powered Insights</span>
<span id="t35" class="t" style="left:145.53px;top:724.01px;font-size:18px;color:#64748b;letter-spacing:0.393px;">Get intelligent analysis of your current data view</span>
<span id="t36" class="t" style="left:1493.18px;top:705.01px;font-size:18px;color:#020817;-webkit-text-stroke:0.38px #020817;letter-spacing:0.668px;">Load History</span>
<span id="t37" class="t" style="left:1732.28px;top:705.01px;font-size:18px;color:#f8fafc;-webkit-text-stroke:0.38px #f8fafc;letter-spacing:0.435px;">Analyze Data</span>
<span id="t38" class="t" style="left:63.56px;top:870.00px;font-size:23.5px;color:#020817;-webkit-text-stroke:0.3px #020817;letter-spacing:-0.211px;">Sales Breakdown by Market (Euro)</span>
<span id="t39" class="t" style="left:63.88px;top:938.00px;font-size:15.5px;color:#020817;-webkit-text-stroke:0.38px #020817;letter-spacing:0.428px;">Left Y-Axis:</span>
<span id="t40" class="t" style="left:168.78px;top:937.01px;font-size:18px;color:#020817;letter-spacing:-0.590px;">Sales</span>
<span id="t41" class="t" style="left:297.63px;top:938.00px;font-size:15.5px;color:#020817;-webkit-text-stroke:0.38px #020817;letter-spacing:0.445px;">Right Y-Axis:</span>
<span id="t42" class="t" style="left:414.28px;top:937.01px;font-size:18px;color:#020817;letter-spacing:0.012px;">None</span>
<span id="t43" class="t" style="left:542.13px;top:938.00px;font-size:15.5px;color:#020817;-webkit-text-stroke:0.38px #020817;letter-spacing:0.260px;">Colors:</span>
<span id="t44" class="t" style="left:616.03px;top:937.01px;font-size:18px;color:#020817;letter-spacing:0.398px;">Default</span>
<span id="t45" class="t" style="left:72.03px;top:986.01px;font-size:18px;color:#64748b;-webkit-text-stroke:0.38px #64748b;letter-spacing:0.652px;">Markets</span>
<span id="t46" class="t" style="left:1020.39px;top:864.00px;font-size:21.5px;color:#020817;-webkit-text-stroke:0.3px #020817;letter-spacing:-0.704px;">Sales Breakdown (Euro)</span>
<span id="t47" class="t" style="left:1020.53px;top:910.01px;font-size:18px;color:#020817;-webkit-text-stroke:0.38px #020817;letter-spacing:0.543px;">Left Y-Axis:</span>
<span id="t48" class="t" style="left:1144.78px;top:910.01px;font-size:18px;color:#020817;letter-spacing:-0.540px;">Sales</span>
<span id="t49" class="t" style="left:1338.53px;top:910.01px;font-size:18px;color:#020817;-webkit-text-stroke:0.38px #020817;letter-spacing:0.521px;">Right Y-Axis:</span>
<span id="t50" class="t" style="left:1475.48px;top:910.01px;font-size:18px;color:#020817;letter-spacing:0.687px;">None</span>
<span id="t51" class="t" style="left:1028.53px;top:959.01px;font-size:18px;color:#64748b;-webkit-text-stroke:0.38px #64748b;letter-spacing:1.011px;">Market</span>
<span id="t52" class="t" style="left:305.10px;top:1541.01px;font-size:17.5px;color:#020817;font-weight:700;letter-spacing:-0.752px;">Sales:</span>
<span id="t53" class="t" style="left:391.20px;top:1541.01px;font-size:17.5px;color:#020817;transform:scaleX(0.9234);transform-origin:0 0;">DE</span>
<span id="t54" class="t" style="left:458.30px;top:1541.01px;font-size:17.5px;color:#020817;transform:scaleX(0.8155);transform-origin:0 0;">ES</span>
<span id="t55" class="t" style="left:522.30px;top:1541.01px;font-size:17.5px;color:#020817;transform:scaleX(0.8552);transform-origin:0 0;">FR</span>
<span id="t56" class="t" style="left:587.30px;top:1541.01px;font-size:17.5px;color:#020817;transform:scaleX(0.9285);transform-origin:0 0;">IT</span>
<span id="t57" class="t" style="left:646.80px;top:1541.01px;font-size:17.5px;color:#020817;transform:scaleX(0.9728);transform-origin:0 0;">UK</span>
</body></html>
